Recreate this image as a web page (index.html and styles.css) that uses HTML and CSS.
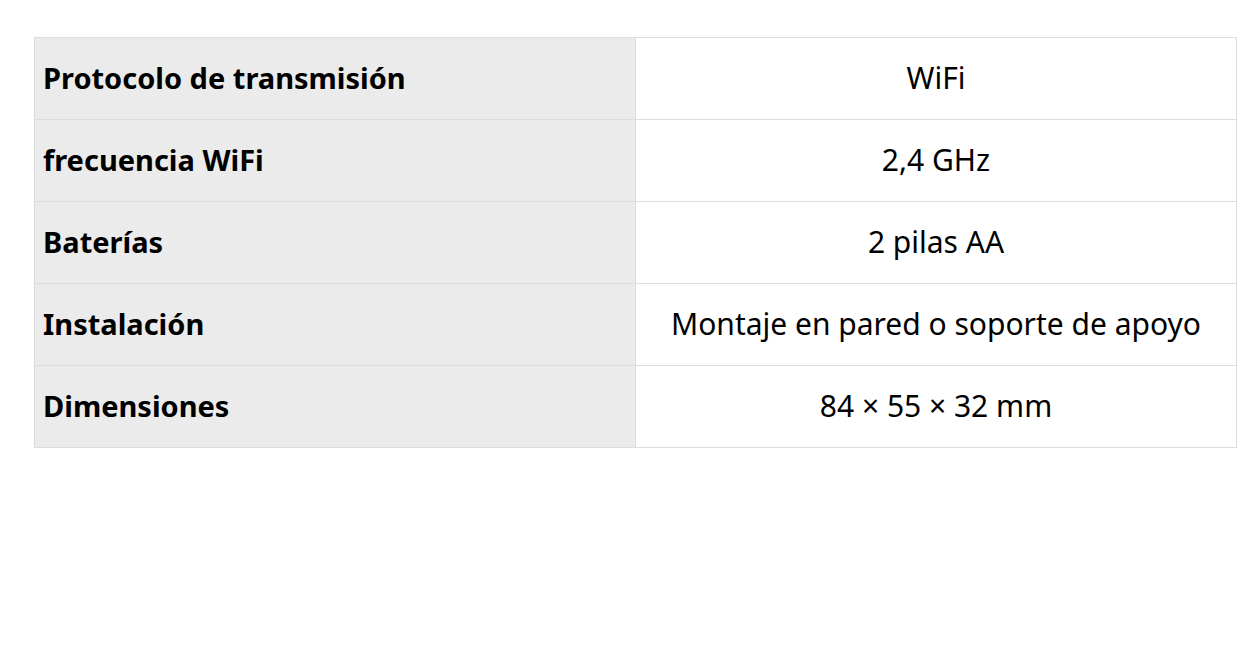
FILE: index.html
```html
<!DOCTYPE html>
<html lang="es">
<head>
<meta charset="utf-8">
<link rel="stylesheet" href="styles.css">
</head>
<body>
<main class="page">
  <table class="specs">
    <tbody>
      <tr><th>Protocolo de transmisión</th><td>WiFi</td></tr>
      <tr><th>frecuencia WiFi</th><td>2,4 GHz</td></tr>
      <tr><th>Baterías</th><td>2 pilas AA</td></tr>
      <tr><th>Instalación</th><td>Montaje en pared o soporte de apoyo</td></tr>
      <tr><th>Dimensiones</th><td>84 × 55 × 32 mm</td></tr>
    </tbody>
  </table>
</main>
</body>
</html>
```
FILE: styles.css
```css
html, body {
  margin: 0;
  padding: 0;
  background: #ffffff;
}
.page {
  padding: 37px 13px 0 34px;
}
.specs {
  width: 1203px;
  border-collapse: collapse;
  table-layout: fixed;
  font-family: "Noto Sans", sans-serif;
  color: #000;
}
.specs th,
.specs td {
  height: 82px;
  padding: 0 8px 3px;
  border: 1px solid #dddddd;
  box-sizing: border-box;
}
.specs th {
  width: 601px;
  background: #ebebeb;
  text-align: left;
  font-size: 29px;
  font-weight: 700;
}
.specs td {
  text-align: center;
  font-size: 30px;
  font-weight: 400;
}
```
